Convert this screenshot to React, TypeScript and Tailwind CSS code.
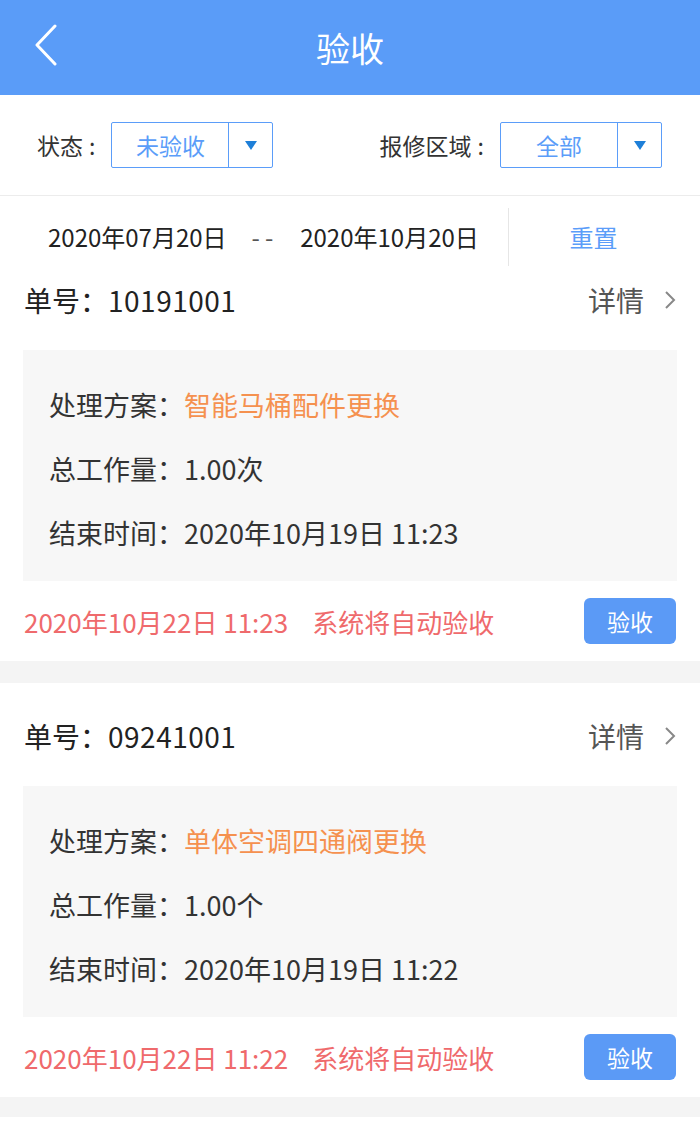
import React from "react";

const font = { fontFamily: "'Noto Sans CJK SC', 'Noto Sans', sans-serif" };

function Select({ label, value }: { label: string; value: string }) {
  return (
    <div className="flex items-center">
      <span className="text-[23px] text-[#333] mr-[16px]">
        {label}
        <span className="ml-[6px]">:</span>
      </span>
      <div className="flex h-[46px] w-[162px] border-[1.5px] border-[#5b9df9] rounded-[2px]">
        <div className="flex-1 flex items-center justify-center text-[23px] text-[#5b9df9]">{value}</div>
        <div className="w-[44px] border-l-[1.5px] border-[#5b9df9] flex items-center justify-center">
          <svg width="12" height="9" viewBox="0 0 12 9">
            <path d="M0 0 L12 0 L6 9 Z" fill="#1e7fd8" />
          </svg>
        </div>
      </div>
    </div>
  );
}

function Card({ no, plan, amount, end, auto, first }: { no: string; plan: string; amount: string; end: string; auto: string; first?: boolean }) {
  return (
    <div className={first ? "bg-white" : "bg-white pt-[21px]"}>
      <div className="h-[64px] flex items-center justify-between pl-[24px] pr-[24px]">
        <span className="text-[28px] text-[#222]">
          单号：<span className="tracking-[0.5px]">{no}</span>
        </span>
        <div className="flex items-center">
          <span className="text-[28px] text-[#555]">详情</span>
          <svg width="12" height="20" viewBox="0 0 12 20" className="ml-[20px]">
            <path d="M2 2 L10 10 L2 18" fill="none" stroke="#888" strokeWidth="2" />
          </svg>
        </div>
      </div>
      <div className="mx-[23px] mt-[18px] bg-[#f7f7f7] pt-[23px] pb-[16px] px-[26px]">
        <div className="h-[64px] flex items-center text-[27px] text-[#333]">
          处理方案：<span className="text-[#f5914f]">{plan}</span>
        </div>
        <div className="h-[64px] flex items-center text-[27px] text-[#333]">总工作量：{amount}</div>
        <div className="h-[64px] flex items-center text-[27px] text-[#333]">结束时间：{end}</div>
      </div>
      <div className="mt-[17px] mb-[17px] h-[46px] flex items-center justify-between pl-[24px] pr-[24px]">
        <div className="flex items-center text-[26px] text-[#ef6a6c]">
          <span>{auto}</span>
          <span className="ml-[24px]">系统将自动验收</span>
        </div>
        <button className="w-[92px] h-[46px] rounded-[6px] bg-[#5b9af6] text-white text-[23px]">验收</button>
      </div>
    </div>
  );
}

export default function App() {
  return (
    <div className="w-[700px] min-h-[1144px] bg-white" style={font}>
      <div className="h-[95px] bg-[#5a9cf8] relative flex items-center justify-center">
        <svg width="26" height="42" viewBox="0 0 26 42" className="absolute left-[33px] top-[24px]">
          <path d="M22 2 L4 21 L22 40" fill="none" stroke="white" strokeWidth="3" strokeLinecap="round" strokeLinejoin="round" />
        </svg>
        <span className="text-[34px] text-white">验收</span>
      </div>
      <div className="h-[101px] flex items-center justify-between pl-[37px] pr-[38px] border-b border-[#ececec]">
        <Select label="状态" value="未验收" />
        <Select label="报修区域" value="全部" />
      </div>
      <div className="h-[72px] flex items-center pt-[10px]">
        <div className="flex items-center text-[24px] text-[#222] pl-[48px] w-[508px]">
          <span>2020年07月20日</span>
          <span className="ml-[25px] text-[#555] tracking-[5px]">--</span>
          <span className="ml-[22px]">2020年10月20日</span>
        </div>
        <div className="w-px h-[58px] bg-[#e6e6e6]" />
        <div className="flex-1 flex justify-center pr-[22px] text-[24px] text-[#5b9df9]">重置</div>
      </div>
      <Card first no="10191001" plan="智能马桶配件更换" amount="1.00次" end="2020年10月19日 11:23" auto="2020年10月22日 11:23" />
      <div className="h-[22px] bg-[#f4f4f4]" />
      <Card no="09241001" plan="单体空调四通阀更换" amount="1.00个" end="2020年10月19日 11:22" auto="2020年10月22日 11:22" />
      <div className="h-[20px] bg-[#f4f4f4]" />
    </div>
  );
}
